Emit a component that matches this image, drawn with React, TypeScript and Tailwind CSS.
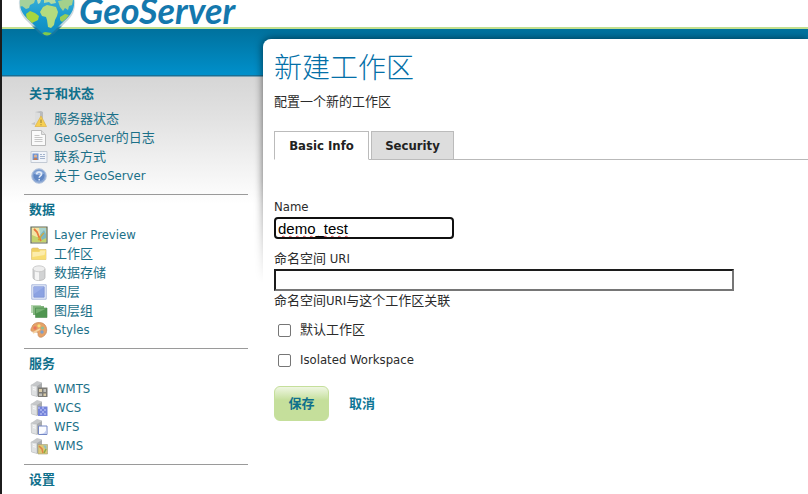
import React, { useState } from "react";

type IconProps = { children: React.ReactNode };

const Icon: React.FC<IconProps> = ({ children }) => (
  <svg viewBox="0 0 16 16" className="w-4 h-4 shrink-0 overflow-visible" aria-hidden="true">
    {children}
  </svg>
);

const Tower: React.FC = () => (
  <g>
    <path d="M0 4l6-4 5 1.500v12L6 15.500 1 14z" fill="#c6c8ca" />
    <path d="M0 4l6 1v10.500L.5 14z" fill="#dfe1e2" stroke="#b3b5b7" strokeWidth=".5" />
    <path d="M6 5l5-3v11.500L6 15.500z" fill="#a9abad" />
    <path d="M2 6.500l3 .7M2 8.500l3 .7" stroke="#fff" strokeWidth=".8" />
  </g>
);

const StatusIcon = () => (
  <Icon>
    <path d="M4 1l6-1 2 1v13H4z" fill="#b9bbbd" />
    <path d="M4 1l5 1v12H4z" fill="#dcdddd" />
    <path d="M0 13l4-2v3z" fill="#c4c4c4" />
    <path d="M10 5l5.500 10.500H4z" fill="#f6cf52" stroke="#e0b650" strokeWidth=".8" />
    <path d="M10 8.500v3.500M10 13.200v1.100" stroke="#a58a3a" strokeWidth="1.200" />
  </Icon>
);

const LogIcon = () => (
  <Icon>
    <path d="M.5.5h10l4 4v11H.5z" fill="#fafafa" stroke="#b9b9b9" />
    <path d="M10.500.5v4h4" fill="#e2e2e2" stroke="#c0c0c0" />
    <path d="M3.500 5.500h5M3.500 7.500h8M3.500 9.500h8M3.500 11.500h8" stroke="#c6c6c6" />
  </Icon>
);

const ContactIcon = () => (
  <Icon>
    <path d="M0 2.500h16v11H0z" fill="#f1f4f9" stroke="#c3cad4" />
    <path d="M1.500 4.500h6v6.500h-6z" fill="#6f94d2" />
    <circle cx="4.500" cy="7" r="1.600" fill="#e0b18f" />
    <path d="M2.500 11c0-3 4-3 4 0z" fill="#c07a54" />
    <path d="M9 5.500h2M12 5.500h2M9 7.500h5M9 9.500h5" stroke="#a3b3cd" />
  </Icon>
);

const AboutIcon = () => (
  <Icon>
    <circle cx="8" cy="8" r="7.300" fill="#86a4d3" stroke="#b3c4de" />
    <circle cx="8" cy="7.500" r="5.500" fill="#5f86c3" />
    <path d="M3 5.500c1-4 9-4 10 0-3 2-7 2-10 0z" fill="#94b2df" />
    <path
      d="M5.700 6.200c0-3 4.800-3 4.800 0 0 1.700-2.300 1.700-2.300 3.600M8.200 11v1.500"
      fill="none"
      stroke="#e4ecf8"
      strokeWidth="1.500"
    />
  </Icon>
);

const PreviewIcon = () => (
  <Icon>
    <path d="M0 0h16v16H0z" fill="#f4e6a4" stroke="#5d6a5f" strokeWidth="1.200" />
    <path d="M8 1h7v9l-5 1z" fill="#a9d4ce" />
    <path d="M1 8l5 2 5-1 4 2v4H1z" fill="#c4d46c" />
    <path d="M9 8l4-5 2 4v4l-4 2z" fill="#7db6c0" />
    <path d="M3 2l3 3 2 5 2 4" fill="none" stroke="#e8793d" strokeWidth="1.800" />
    <path d="M7 13c2-1 3-5 6-7" fill="none" stroke="#d8a631" strokeWidth="1.200" />
  </Icon>
);

const FolderIcon = () => (
  <Icon>
    <path d="M.5 3l1-1H7l1 1.500h7v10H.5z" fill="#efcf63" stroke="#d8bb72" strokeWidth=".6" />
    <path d="M1 5.500h7l1-1.500h6v9.500H1z" fill="#f8dd72" />
    <path d="M1.500 6h7l1-1.500h5l-1 4.500-12 2z" fill="#fcecac" />
  </Icon>
);

const StoreIcon = () => (
  <Icon>
    <path d="M2 4v8.500c0 4 12 4 12 0V4z" fill="#d2d3d4" stroke="#b0b0b0" strokeWidth=".7" />
    <path d="M4 6v8.500c1 .5 3 .8 4 .8V6z" fill="#f5f5f5" />
    <ellipse cx="8" cy="3.800" rx="6" ry="3" fill="#eee" stroke="#bcbcbc" strokeWidth=".7" />
  </Icon>
);

const LayerIcon = () => (
  <Icon>
    <path d="M.8.800h14.400v14.400H.8z" fill="#e9effb" stroke="#aab8dc" />
    <path d="M2.800 2.800h10.400v10.400H2.800z" fill="#8ba2e2" stroke="#7d93d3" strokeWidth=".8" />
    <path d="M3 3h10L3 10z" fill="#9aaee8" />
  </Icon>
);

const GroupIcon = () => (
  <Icon>
    <path d="M0 2h10v8H0z" fill="#b7d7b3" />
    <path d="M2 3h11v9H2z" fill="#82b57d" />
    <path d="M4.500 5H16v9.500H4.500z" fill="#4f9550" stroke="#4a8a4d" strokeWidth=".6" />
    <path d="M5 5.500h10.500l-10.500 5z" fill="#76b173" />
  </Icon>
);

const StylesIcon = () => (
  <Icon>
    <path
      d="M1 5c1-5 10-6 13-2 3 4 2 10-3 12-4 1-4-2-4-4S1 11 0 8.500C-.3 7 .5 6 1 5z"
      fill="#e6a267"
      stroke="#c98d5e"
      strokeWidth=".8"
    />
    <circle cx="4" cy="6" r="1.700" fill="#e8755c" />
    <circle cx="8" cy="3.800" r="1.600" fill="#f5e17c" />
    <circle cx="11.500" cy="6" r="1.600" fill="#8dbf95" />
    <circle cx="11" cy="10" r="1.700" fill="#7f9fc9" />
    <path d="M2 11l7-4" stroke="#f5d4a4" strokeWidth="1.500" />
  </Icon>
);

const WmtsIcon = () => (
  <Icon>
    <Tower />
    <path d="M7 6.500h9.500V16H7z" fill="#7d7b75" />
    <path d="M8 8h3v3H8zM12.500 12.500h2.500v2.500h-2.500z" fill="#d9cba6" />
    <path d="M12.500 8h2.500v3h-2.500zM8 12.500h3v2.500H8z" fill="#bdbdb8" />
  </Icon>
);

const WcsIcon = () => (
  <Icon>
    <Tower />
    <path d="M7 6.500h9.500V16H7z" fill="#7584da" />
    <path d="M7 7h2v2H7zM11 7h2v2h-2zM9 9h2v2H9zM13 9h2v2h-2zM11 11h2v2h-2zM9 13h2v2H9zM13 13h2v2h-2z" fill="#a1abeb" />
  </Icon>
);

const WfsIcon = () => (
  <Icon>
    <Tower />
    <path d="M7.500 7h8.500v8.500H7.500z" fill="#fbfcff" stroke="#7487c4" />
    <path d="M15.500 9v6H9c4 0 6.500-3 6.500-6z" fill="#c3cef1" />
  </Icon>
);

const WmsIcon = () => (
  <Icon>
    <Tower />
    <path d="M7 6.500h9.500V16H7z" fill="#dcc876" stroke="#a09e78" strokeWidth=".6" />
    <path d="M12 7.500h3.500v5z" fill="#8cc0c4" />
    <path d="M8 8l3 3 1 4" fill="none" stroke="#e08246" strokeWidth="1.500" />
    <path d="M13 15l2-4" stroke="#8dac45" strokeWidth="1.500" />
  </Icon>
);

const sections = [
  {
    title: "关于和状态",
    items: [
      { label: "服务器状态", icon: <StatusIcon /> },
      { label: "GeoServer的日志", icon: <LogIcon /> },
      { label: "联系方式", icon: <ContactIcon /> },
      { label: "关于 GeoServer", icon: <AboutIcon /> },
    ],
  },
  {
    title: "数据",
    items: [
      { label: "Layer Preview", icon: <PreviewIcon /> },
      { label: "工作区", icon: <FolderIcon /> },
      { label: "数据存储", icon: <StoreIcon /> },
      { label: "图层", icon: <LayerIcon /> },
      { label: "图层组", icon: <GroupIcon /> },
      { label: "Styles", icon: <StylesIcon /> },
    ],
  },
  {
    title: "服务",
    items: [
      { label: "WMTS", icon: <WmtsIcon /> },
      { label: "WCS", icon: <WcsIcon /> },
      { label: "WFS", icon: <WfsIcon /> },
      { label: "WMS", icon: <WmsIcon /> },
    ],
  },
  { title: "设置", items: [] },
];

const Globe: React.FC = () => (
  <svg viewBox="0 0 58 40" className="absolute left-4 top-0 w-[58px] h-10" aria-hidden="true">
    <defs>
      <linearGradient id="sea" x1="0" y1="0" x2="0" y2="1">
        <stop offset="0" stopColor="#35acd6" />
        <stop offset="0.5" stopColor="#1597cb" />
        <stop offset="1" stopColor="#0a86bb" />
      </linearGradient>
      <linearGradient id="rim" x1="0" y1="0" x2="0" y2="1">
        <stop offset="0" stopColor="#dfe3e4" />
        <stop offset="0.68" stopColor="#c3d3d8" />
        <stop offset="0.75" stopColor="#1a7ba3" />
        <stop offset="1" stopColor="#11749e" />
      </linearGradient>
      <clipPath id="drop">
        <path d="M2 0C1 9 5 15 12 21l11 11q6 7 12 0l11-11c7-6 11-12 10-21z" />
      </clipPath>
    </defs>
    <path d="M1 0C0 10 4 17 10 22l12 12q7 6 14 0l12-12c6-5 10-12 9-22z" fill="url(#rim)" />
    <g clipPath="url(#drop)">
      <path d="M0 0h58v40H0z" fill="url(#sea)" />
      {/* Americas */}
      <path d="M2 0h15l-1 3-4 2-1 3-3 1-4-3-2 1z" fill="#a5d29b" />
      <path d="M19 0h4l-1 3-2 1z" fill="#b9dcb8" />
      <path d="M8 14l4-3 5 2 4 3-1 4-4 2-4 2-3-4z" fill="#a8d63e" />
      {/* Africa */}
      <path d="M25 7l4-2 5 1 4 1 2 5-1 4-2 4-1 5-3 3-3-1-1-7-1-3-4-1-2-4z" fill="#b3db7e" />
      <path d="M26 0h11l1 3-5 1-2-2-5 1z" fill="#b4dba0" />
      {/* Asia and Oceania */}
      <path d="M40 1l5-1h10l-1 5-3 1-1 4-3-2-2 3-3-4z" fill="#a3d18c" />
      <path d="M42 17l5-3 4 1-3 4-4 3-2-2z" fill="#98cd57" />
      <path d="M22 34l5-2 7 1-2 5h-7z" fill="#80c94a" />
    </g>
  </svg>
);

const Sidebar: React.FC = () => (
  <nav className="w-[261px] shrink-0 pl-[22px] pr-[15px] pt-[50px]">
    {sections.map((section) => (
      <section
        key={section.title}
        className="pt-[5px] pb-[9px] border-b border-[#9a9a9a] last:border-b-0"
      >
        <h2 className="pl-[5px] mb-[5px] h-5 leading-5 font-bold text-[#0f708c]">
          {section.title}
        </h2>
        <ul>
          {section.items.map((item) => (
            <li key={item.label}>
              <a
                href="#"
                className="flex items-center gap-[7px] pl-[7px] h-[19px] text-[#1b7088] whitespace-nowrap"
              >
                {item.icon}
                {item.label}
              </a>
            </li>
          ))}
        </ul>
      </section>
    ))}
  </nav>
);

const WorkspaceForm: React.FC = () => {
  const [name, setName] = useState("demo_test");
  const [uri, setUri] = useState("");

  return (
    <form className="pt-9" onSubmit={(e) => e.preventDefault()}>
      <label htmlFor="name" className="block h-[21px] leading-[21px] pl-[11px]">
        Name
      </label>
      <div className="pl-[11px]">
        <input
          id="name"
          type="text"
          spellCheck={false}
          value={name}
          onChange={(e) => setName(e.target.value)}
          className="block w-[180px] h-[22px] px-0.5 border-2 border-[#101010] rounded bg-white font-['Liberation_Sans',sans-serif] text-[15px] leading-[18px] text-black underline decoration-wavy decoration-1 decoration-[#e03c3c] outline-none"
        />
      </div>
      <div className="pl-[11px] pt-[10px]">
        <label htmlFor="uri" className="block h-5 leading-5">
          命名空间 URI
        </label>
        <input
          id="uri"
          type="text"
          value={uri}
          onChange={(e) => setUri(e.target.value)}
          className="block w-full max-w-[460px] h-[22px] px-0.5 border-2 border-t-[#1c1c1c] border-l-[#1c1c1c] border-r-[#767676] border-b-[#767676] bg-white outline-none"
        />
        <p className="h-[19px] leading-[19px]">命名空间URI与这个工作区关联</p>
        <div className="flex flex-col gap-[10px] pt-[10px] pl-1">
          <label className="flex items-center gap-[9px] h-5">
            <input
              type="checkbox"
              className="appearance-none w-[13px] h-[13px] border border-[#767676] rounded-xs bg-white checked:bg-[#0f7ab0]"
            />
            默认工作区
          </label>
          <label className="flex items-center gap-[9px] h-5">
            <input
              type="checkbox"
              className="appearance-none w-[13px] h-[13px] border border-[#767676] rounded-xs bg-white checked:bg-[#0f7ab0]"
            />
            Isolated Workspace
          </label>
        </div>
        <div className="flex items-center pt-4">
          <button
            type="submit"
            className="w-[55px] h-[35px] rounded-md border border-[#c5df9b] bg-linear-to-b from-[#eff6e2] to-[#c5df9b] to-40% font-bold text-[#0f708c]"
          >
            保存
          </button>
          <a href="#" className="ml-5 font-bold text-[#0f7696]">
            取消
          </a>
        </div>
      </div>
    </form>
  );
};

export default function App() {
  return (
    <div className="min-h-screen flex flex-col overflow-x-hidden border-l-2 border-[#1c1c1c] bg-white font-['DejaVu_Sans_Condensed','Noto_Sans','Noto_Sans_CJK_SC',sans-serif] text-[13px] text-[#2b2b2b]">
      <header className="relative z-10 h-[29px] border-b-2 border-[#c3e08f] bg-white">
        <a href="#" aria-label="GeoServer">
          <Globe />
          <span className="block pl-[77px] h-[27px] leading-[21px] font-['Lato',sans-serif] font-bold italic text-[36px] text-[#1478ad]">
            GeoServer
          </span>
        </a>
      </header>

      <div className="grow flex bg-[linear-gradient(#00719d_0px,#0090cb_46px,#1a6f94_46px,#1a6f94_47px,#d6d6d6_48px,#e2e2e2_90px,#ffffff_175px)]">
        <Sidebar />

        <main className="relative grow min-w-0 mt-[10px]">
          {/* Soft edge that fades out down the panel */}
          <div className="absolute -left-3 -top-3 right-0 h-64 pl-3 pt-3 overflow-hidden mask-b-from-60% mask-b-to-100%">
            <div className="h-full rounded-tl-lg shadow-[0_0_9px_rgba(0,0,0,0.6)]" />
          </div>

          <div className="relative h-full rounded-tl-lg bg-white">
            <div className="pl-[11px] pt-[7px]">
              <h1 className="h-10 leading-10 text-[28px] font-light font-['Noto_Sans_CJK_SC',sans-serif] text-[#0470a8]">
                新建工作区
              </h1>
              <p className="h-5 leading-5 mt-[6px]">配置一个新的工作区</p>
            </div>
            <div className="pl-[11px] pt-[19px]">
              <div role="tablist" className="flex gap-0.5 border-b border-[#b9b9b9]">
                <button
                  type="button"
                  role="tab"
                  aria-selected="true"
                  className="h-[29px] -mb-px w-[95px] border border-[#bbb] border-b-white bg-white font-bold text-[#222]"
                >
                  Basic Info
                </button>
                <button
                  type="button"
                  role="tab"
                  aria-selected="false"
                  className="h-[29px] -mb-px w-[83px] border border-[#bbb] bg-[#ddd] font-bold text-[#222]"
                >
                  Security
                </button>
              </div>
            </div>
            <WorkspaceForm />
          </div>
        </main>
      </div>
    </div>
  );
}
